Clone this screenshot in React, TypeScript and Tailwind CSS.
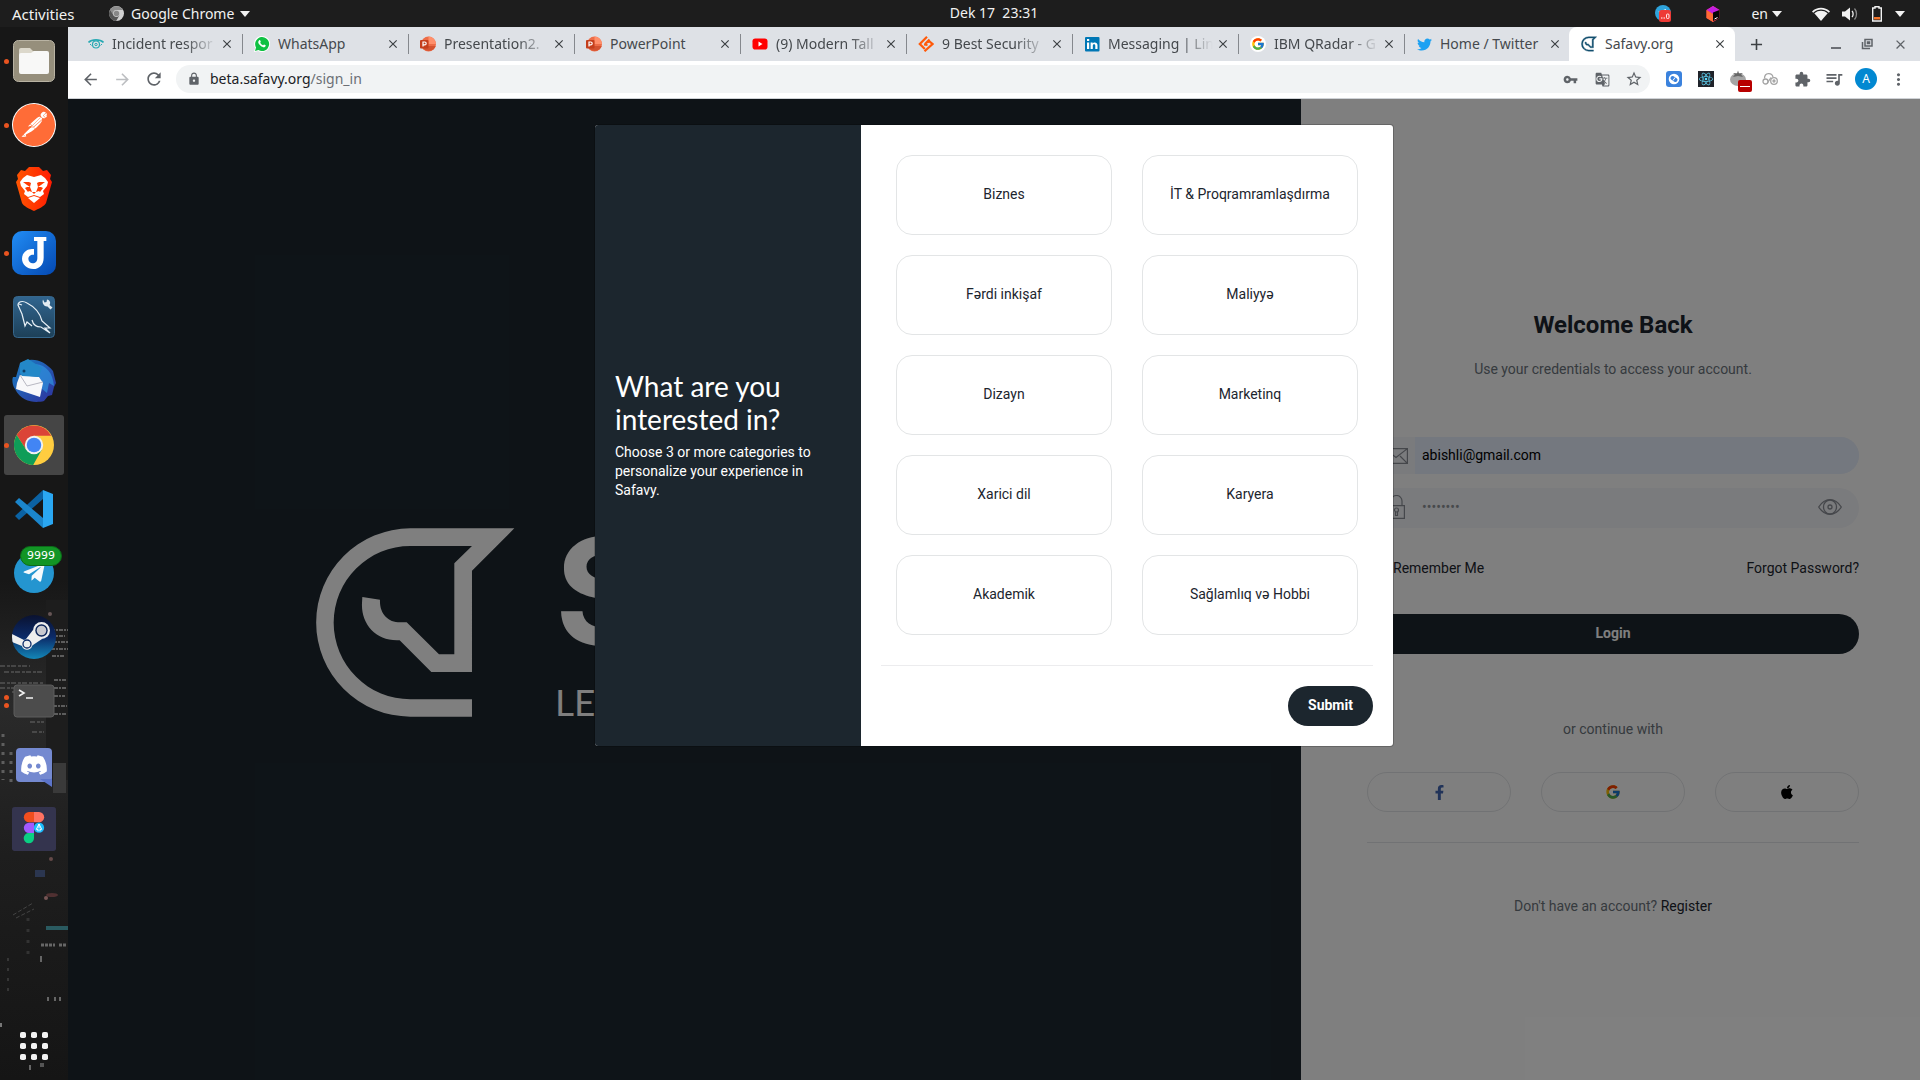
import React from "react";
import { FcGoogle } from "react-icons/fc";
import { FaFacebookF, FaApple, FaTwitter, FaDiscord, FaTelegramPlane } from "react-icons/fa";
import { SiPostman, SiReact } from "react-icons/si";
import { MdArrowBack, MdArrowForward, MdRefresh, MdLock, MdVpnKey, MdStarBorder, MdExtension, MdQueueMusic, MdMoreVert, MdClose, MdAdd, MdGTranslate } from "react-icons/md";

const MARK =
  "M513 650H328A282 282 0 0 1 328 85H640L513 212V516H391L296 421H288C222 421 180 370 183 310L184 291L237 299C235 340 260 368 300 367H317L414 463H460V190L513 138H328A230 230 0 0 0 328 598H513Z";

function PowerPointIcon() {
  return (
    <svg viewBox="0 0 16 16" className="size-4">
      <circle cx="8.500" cy="8" r="7.500" fill="#ed6c47" />
      <path d="M8.500.5a7.500 7.500 0 0 1 7.500 7.500H8.500Z" fill="#ff8f6b" />
      <path d="M1.500 10h14.200a7.500 7.500 0 0 1-14 0Z" fill="#d35230" />
      <rect x="0" y="4" width="8.500" height="8.500" rx="1" fill="#c43e1c" />
      <path d="M3 10.500v-4.500h1.700a1.400 1.400 0 0 1 0 2.900H3" fill="none" stroke="#fff" strokeWidth="1.200" />
    </svg>
  );
}

function WhatsAppIcon() {
  return (
    <svg viewBox="0 0 16 16" className="size-4">
      <path d="M0 16l1.100-4.100A8 8 0 1 1 4.200 15Z" fill="#fff" />
      <path d="M1 15l1-3.600A7 7 0 1 1 4.500 14Z" fill="#0fc143" />
      <path d="M5.200 4.200c.6-.4.900-.2 1.100.3l.5 1.200c0 .4-.6.800-.6 1.100.6 1.200 1.500 2 2.700 2.500.4 0 .8-.9 1.200-.8l1.500.8c.4.300-.2 1.700-1.200 2-2 .3-5.500-2.300-6.100-4.500-.1-1 .3-2.200.9-2.600Z" fill="#fff" />
    </svg>
  );
}

function EyeFavicon() {
  return (
    <svg viewBox="0 0 16 16" className="size-4" fill="none" stroke="#27a9b3">
      <path d="M.5 6.500C4 3 12 3 15.500 6.500" strokeWidth="1.600" />
      <circle cx="8" cy="8.500" r="3.500" strokeWidth="1.200" />
      <circle cx="8" cy="8.500" r="1.200" strokeWidth="1" />
      <path d="M2 8l1.500 1.500M14 8l-1.500 1.500" />
    </svg>
  );
}

function YouTubeIcon() {
  return (
    <svg viewBox="0 0 16 16" className="size-4">
      <rect x="0.500" y="2.500" width="15" height="11" rx="2.800" fill="#f00" />
      <path d="M6.500 5.500v5l4-2.500Z" fill="#fff" />
    </svg>
  );
}

function DiamondIcon() {
  return (
    <svg viewBox="0 0 16 16" className="size-4" fill="none" stroke="#ff5a0a" strokeWidth="2.200">
      <path d="M9 .8L1.800 8l5 5" />
      <path d="M11.500 3.500L7 8M8.500 6.500l3-1 3 2.500-8 7.200" />
      <path d="M6 8.500l3.500.5" />
    </svg>
  );
}

function LinkedInIcon() {
  return (
    <svg viewBox="0 0 16 16" className="size-4">
      <rect x="1" y="1" width="14.500" height="14.500" rx="1" fill="#0077b5" />
      <path d="M3 6.500h2.200V13H3ZM3 3h2.200v2H3ZM6.600 6.500h2v1c1-1.600 4.900-1.700 4.900 1.700V13h-2.200V9.700c0-2-2.500-1.800-2.500 0V13H6.600Z" fill="#fff" />
    </svg>
  );
}

function GoogleFavicon() {
  return (
    <span className="flex size-4 items-center justify-center rounded-full bg-white">
      <FcGoogle size={14} />
    </span>
  );
}

function SafavyIcon() {
  return (
    <svg viewBox="30 70 620 600" className="size-4" fill="#14506f">
      <path d={MARK} stroke="#14506f" strokeWidth="14" />
    </svg>
  );
}

type TabInfo = { title: string; icon: React.ReactNode; fade?: boolean; active?: boolean };

const tabs: TabInfo[] = [
  { title: "Incident respor", icon: <EyeFavicon />, fade: true },
  { title: "WhatsApp", icon: <WhatsAppIcon /> },
  { title: "Presentation2.", icon: <PowerPointIcon />, fade: true },
  { title: "PowerPoint", icon: <PowerPointIcon /> },
  { title: "(9) Modern Tall", icon: <YouTubeIcon />, fade: true },
  { title: "9 Best Security", icon: <DiamondIcon />, fade: true },
  { title: "Messaging | Lin", icon: <LinkedInIcon />, fade: true },
  { title: "IBM QRadar - G", icon: <GoogleFavicon />, fade: true },
  { title: "Home / Twitter", icon: <FaTwitter size={15} color="#1da1f2" /> },
  { title: "Safavy.org", icon: <SafavyIcon />, active: true },
];

function Tab({ tab }: { tab: TabInfo }) {
  const skin = tab.active ? "-ml-px rounded-t-lg bg-white" : "";
  const mask = tab.fade ? "[mask-image:linear-gradient(to_right,black_70%,transparent)]" : "";
  return (
    <div className={"flex h-[34px] w-[166px] min-w-0 items-center pr-[7px] pl-3 " + skin}>
      <span className="flex size-4 shrink-0 items-center justify-center">{tab.icon}</span>
      <span className={"ml-2 min-w-0 flex-1 overflow-hidden pb-px text-[14px] leading-5 whitespace-nowrap text-[#45494d] " + mask}>{tab.title}</span>
      <button type="button" aria-label={"Close " + tab.title} className="ml-[2px] flex size-4 shrink-0 items-center justify-center text-[#3c4043]">
        <MdClose size={14} />
      </button>
    </div>
  );
}

function Caret() {
  return (
    <svg viewBox="0 0 10 6" className="h-[6px] w-[10px]" fill="#f2f2f2">
      <path d="M0 0h10L5 6Z" />
    </svg>
  );
}

function ChromeLogo({ className, mono }: { className: string; mono?: boolean }) {
  const c = mono ? ["#8d8d8d", "#555", "#d0d0d0", "#888", "#ccc"] : ["#db4437", "#0f9d58", "#ffcd40", "#4285f4", "#f1f1f1"];
  return (
    <svg viewBox="0 0 48 48" className={className}>
      <circle cx="24" cy="24" r="24" fill={c[2]} />
      <path d="M24 13H44.800A24 24 0 0 0 3.200 12L14.500 29.500Z" fill={c[0]} />
      <path d="M3.200 12A24 24 0 0 0 23 48L33.500 29.500H14.500Z" fill={c[1]} />
      <circle cx="24" cy="24" r="11" fill={c[4]} />
      <circle cx="24" cy="24" r="8.700" fill={c[3]} />
    </svg>
  );
}

function TopBar() {
  return (
    <header className="grid h-[27px] grid-cols-[68px_1fr_auto_1fr] items-center bg-[#1d1d1d] text-[14px] leading-5 text-[#f2f2f2]">
      <button type="button" className="justify-self-start pl-3 text-[15px] whitespace-nowrap">Activities</button>
      <button type="button" className="ml-[41px] flex items-center justify-self-start whitespace-nowrap">
        <ChromeLogo className="mr-[7px] size-[15px]" mono />
        Google Chrome
        <span className="ml-[6px]"><Caret /></span>
      </button>
      <time className="pb-px whitespace-pre">Dek 17  23:31</time>
      <div className="flex items-center justify-self-end pr-[15px]">
        <svg viewBox="0 0 18 18" className="size-[18px]">
          <circle cx="8" cy="8" r="8" fill="#2ea3dc" />
          <path d="M3 7l8-3-1 4Z" fill="#fff" />
          <rect x="4" y="5" width="12" height="12" rx="2.500" fill="#ee3a36" />
          <path d="M6 13h1.500M8.500 13H10" stroke="#fff" />
          <rect x="11.500" y="9" width="2.500" height="4.500" rx="1" fill="none" stroke="#fff" strokeWidth="0.900" />
        </svg>
        <svg viewBox="0 0 16 18" className="ml-8 h-[18px] w-4">
          <path d="M8 1l6.500 4v8L8 17 1.500 13V5Z" fill="#fc3f4d" />
          <path d="M1.500 5L8 1l6.500 4L8 9Z" fill="#c51ee0" />
          <path d="M1.500 5L8 9v8l-6.500-4Z" fill="#ff6a35" />
          <path d="M8 7.500l6.500-2.500v8L8 16Z" fill="#060606" />
          <path d="M9.500 14l3-1.500" stroke="#fff" />
        </svg>
        <span className="ml-[30px]">en</span>
        <span className="ml-[4px]"><Caret /></span>
        <svg viewBox="0 0 18 14" className="ml-[30px] h-[14px] w-[18px]" fill="#f2f2f2">
          <path d="M0 4.500C5-.5 13-.5 18 4.500L16.800 5.800C12 1.500 6 1.500 1.200 5.800Z" />
          <path d="M2.300 6.300C6.500 3 11.500 3 15.700 6.300L9 14Z" />
        </svg>
        <svg viewBox="0 0 18 16" className="ml-[11px] h-4 w-[18px]" fill="none" stroke="#8b8b8b" strokeWidth="1.300">
          <path d="M1 5.500h3L9 1.500v13L4 10.500H1Z" fill="#f2f2f2" stroke="none" />
          <path d="M11 5c1.500 1.500 1.500 4.500 0 6" stroke="#f2f2f2" />
          <path d="M13.500 2.500c2.700 3 2.700 8 0 11" />
        </svg>
        <svg viewBox="0 0 12 16" className="ml-[12px] h-4 w-3">
          <path d="M4 2V.8h4V2h2.300v13H1.700V2Z" fill="none" stroke="#f2f2f2" strokeWidth="1.400" />
          <path d="M3 11h6v2.500H3Z" fill="#f37329" />
        </svg>
        <span className="ml-[12px]"><Caret /></span>
      </div>
    </header>
  );
}

function FilesIcon() {
  return (
    <svg viewBox="0 0 42 42" className="size-[42px]">
      <rect x="0.500" y="0.500" width="41" height="41" rx="5" fill="#968f7c" stroke="#b9b3a3" />
      <path d="M6 10a2 2 0 0 1 2-2h9l3 3h6v6H6Z" fill="#dcd8cb" />
      <path d="M6 15a2 2 0 0 1 2-2h10l3-2h13a2 2 0 0 1 2 2v19a2 2 0 0 1-2 2H8a2 2 0 0 1-2-2Z" fill="#f8f8f7" />
    </svg>
  );
}

function PostmanIcon() {
  return (
    <span className="flex size-11 items-center justify-center rounded-full bg-white text-[#ff6c37]">
      <SiPostman size={42} />
    </span>
  );
}

function BraveIcon() {
  return (
    <svg viewBox="0 0 38 44" className="h-11 w-[38px]">
      <defs>
        <linearGradient id="brave">
          <stop offset="0" stopColor="#ff5601" />
          <stop offset="1" stopColor="#ff1b02" />
        </linearGradient>
      </defs>
      <path d="M10 4l4-4h10l4 4 4-1 4 5-1 4 2 3-6 21c-1 3-8 6-12 8-4-2-11-5-12-8L1 15l2-3-1-4 4-5Z" fill="url(#brave)" />
      <path d="M19 10l7-2 4 3 3 4-1 4-4 5 1 3-4 3-3-1-3-1-3 1-3 1-4-3 1-3-4-5-1-4 3-4 4-3Z" fill="#fff" />
      <path d="M8 15l6 0 2 1-1 4 2 5-3-1-1 1-3-4 2-1 3 0-3-2ZM30 15l-6 0-2 1 1 4-2 5 3-1 1 1 3-4-2-1-3 0 3-2ZM17 25h4l-2 2Z" fill="#ff3b02" />
      <path d="M13 31l6-2 6 2-6 5Z" fill="#fff" />
    </svg>
  );
}

function JoplinIcon() {
  return (
    <svg viewBox="0 0 132 132" className="size-11">
      <defs>
        <linearGradient id="joplin" x2="1" y2="1">
          <stop offset="0" stopColor="#218df5" />
          <stop offset="1" stopColor="#0448b2" />
        </linearGradient>
      </defs>
      <rect width="132" height="132" rx="30" fill="url(#joplin)" />
      <path d="M66 18H103V30H95V80C95 101 82 114 64 114C45 114 30 100 30 83C30 66 44 54 60 54H66V71C55 70 49 76 49 83C49 91 55 97 62 97C70 97 76 91 76 82V30H66Z" fill="#fff" />
    </svg>
  );
}

function WorkbenchIcon() {
  return (
    <svg viewBox="0 0 42 42" className="size-[42px]">
      <defs>
        <linearGradient id="bench" x2="0" y2="1">
          <stop offset="0" stopColor="#31658f" />
          <stop offset="1" stopColor="#1d4058" />
        </linearGradient>
      </defs>
      <rect x="0.500" y="0.500" width="41" height="41" rx="4" fill="url(#bench)" stroke="#36678c" />
      <path d="M9 18L5 9C5 6 9 4 14 7C22 11 27 17 29 25L37 32L32 32L37 37L28 31C23 31 20 28 19 24M9 18L12 30L14 26L19 30M6 8L9 9" fill="none" stroke="#e8f0f6" strokeWidth="1.200" />
      <path d="M30 3.500l1.500 3 2-.5.500-2.500c3 .5 4 3.500 2.500 5.500l3 2.500-2 2-3-3c-3 .5-6-3.500-4.500-7Z" fill="#e3ebf1" />
    </svg>
  );
}

function ThunderbirdIcon() {
  return (
    <svg viewBox="0 0 44 44" className="size-11">
      <defs>
        <linearGradient id="bird" x2="1" y2="1">
          <stop offset="0" stopColor="#1a80c4" />
          <stop offset="1" stopColor="#2f2f9c" />
        </linearGradient>
      </defs>
      <path d="M8 4C20-3 33 2 41 12L44 24 42 28 40 36 36 37 32 42C24 44 10 44 3 30C0 26 0 20 1 18L4 18Z" fill="url(#bird)" />
      <path d="M24 5C34 6 41 14 42 27L37 24 35 34 30 30Z" fill="#2f93e0" opacity="0.700" />
      <path d="M8 16l19 2 4 6-3 14L4 30 5 24Z" fill="#f8f8fa" />
      <path d="M8 16l7 11 16-4" fill="none" stroke="#b8b8c2" />
      <path d="M8 4l8-4 14 9-3 9-17-1-2-3Z" fill="#2388c8" />
      <circle cx="12" cy="12" r="1.500" fill="#0e3e68" />
    </svg>
  );
}

function CodeIcon() {
  return (
    <svg viewBox="0 0 40 40" className="size-10">
      <path d="M1 27l4 4L29 10V1Z" fill="#0b62a3" />
      <path d="M1 13l4-4 24 20v10Z" fill="#1b86cc" />
      <path d="M29 1l10 4v30l-10 4Z" fill="#2aa7f2" />
    </svg>
  );
}

function TelegramIcon() {
  return (
    <span className="relative flex size-10 items-center justify-center rounded-full bg-[#2495d0]">
      <FaTelegramPlane size={24} color="#f5f9fc" />
      <span className="absolute -top-[7px] left-[6px] rounded-full border border-[#0c6b1a] bg-[#129525] px-[6px] font-['DejaVu_Sans',sans-serif] text-[11px] leading-[18px] text-white">9999</span>
    </span>
  );
}

function SteamIcon() {
  return (
    <svg viewBox="0 0 44 44" className="size-11">
      <defs>
        <linearGradient id="steam" x2="0" y2="1">
          <stop offset="0" stopColor="#0a1230" />
          <stop offset="0.500" stopColor="#0b2a68" />
          <stop offset="1" stopColor="#1387b8" />
        </linearGradient>
        <clipPath id="disc"><circle cx="22" cy="22" r="22" /></clipPath>
      </defs>
      <circle cx="22" cy="22" r="22" fill="url(#steam)" />
      <g clipPath="url(#disc)">
        <path d="M0 19l12 6 2-1 7-9 9 9-9 6-1 1c-1 5-9 5-10 0L0 27Z" fill="#eee" />
      </g>
      <circle cx="29.500" cy="15.500" r="8.500" fill="#eee" />
      <circle cx="29.500" cy="15.500" r="6.200" fill="#0b2458" />
      <circle cx="29.500" cy="15.500" r="4.800" fill="#c9c9cf" />
      <circle cx="15" cy="29" r="4" fill="none" stroke="#0b2a68" strokeWidth="1.300" />
    </svg>
  );
}

function TerminalIcon() {
  return (
    <svg viewBox="0 0 42 34" className="h-[34px] w-[42px]">
      <rect x="1" y="1" width="40" height="32" rx="3" fill="#4c4c4c" stroke="#5d5d5d" />
      <path d="M6 6l5 3-5 3M13 14h7" fill="none" stroke="#f2f2f2" strokeWidth="1.600" />
    </svg>
  );
}

function DiscordIcon() {
  return (
    <span className="relative flex h-[34px] w-9 items-center justify-center rounded-[4px] bg-[#7489d0]">
      <svg viewBox="0 0 12 8" className="absolute right-0 -bottom-[5px] h-2 w-3" fill="#5c74c9"><path d="M0 0h12v8Z" /></svg>
      <FaDiscord size={28} color="#fff" />
    </span>
  );
}

function FigmaIcon() {
  return (
    <svg viewBox="0 0 132 132" className="size-11">
      <rect width="132" height="132" rx="8" fill="#34344e" />
      <path d="M66 15H51a15.500 15.500 0 0 0 0 31H66Z" fill="#f24e1e" />
      <path d="M66 15H81a15.500 15.500 0 0 1 0 31H66Z" fill="#ff7262" />
      <path d="M66 47H51a15.500 15.500 0 0 0 0 31H66Z" fill="#a259ff" />
      <path d="M66 78H51a15.500 15.500 0 1 0 15 15Z" fill="#0acf83" />
      <circle cx="81" cy="62" r="15.500" fill="#1abcfe" />
      <path d="M81 51l-8 16h5v6M81 51l8 16h-5v6M81 51v13" fill="none" stroke="#fff" strokeWidth="3" />
    </svg>
  );
}

const apps: { name: string; icon: React.ReactNode; dots: number; active?: boolean }[] = [
  { name: "Files", icon: <FilesIcon />, dots: 1 },
  { name: "Postman", icon: <PostmanIcon />, dots: 1 },
  { name: "Brave", icon: <BraveIcon />, dots: 0 },
  { name: "Joplin", icon: <JoplinIcon />, dots: 1 },
  { name: "MySQL Workbench", icon: <WorkbenchIcon />, dots: 0 },
  { name: "Thunderbird", icon: <ThunderbirdIcon />, dots: 0 },
  { name: "Google Chrome", icon: <ChromeLogo className="size-10" />, dots: 1, active: true },
  { name: "Visual Studio Code", icon: <CodeIcon />, dots: 0 },
  { name: "Telegram", icon: <TelegramIcon />, dots: 0 },
  { name: "Steam", icon: <SteamIcon />, dots: 0 },
  { name: "Terminal", icon: <TerminalIcon />, dots: 2 },
  { name: "Discord", icon: <DiscordIcon />, dots: 0 },
  { name: "Figma", icon: <FigmaIcon />, dots: 0 },
];

function CityBackdrop() {
  return (
    <svg viewBox="0 0 68 500" className="pointer-events-none absolute bottom-0 left-0 h-[500px] w-[68px]" aria-hidden="true">
      <defs>
        <linearGradient id="city" x2="0" y2="1">
          <stop offset="0" stopColor="#171717" />
          <stop offset="0.250" stopColor="#2a2a2a" />
          <stop offset="0.550" stopColor="#1e1e1e" />
          <stop offset="1" stopColor="#151515" />
        </linearGradient>
      </defs>
      <rect width="68" height="500" fill="url(#city)" />
      <path d="M46 20h22v180H46Z" fill="#1d1d1d" />
      <g fill="none" stroke="#777" opacity="0.700">
        <path d="M51 50h17M51 56h14M53 62h15M51 69h17M52 76h12M54 100h13M54 108h13M54 116h11M53 126h14M54 134h12" strokeWidth="2" strokeDasharray="4 1 2 1" />
        <path d="M0 86h30M4 92h40M0 103h44M0 108h50M12 112h32M30 133h16M30 142h14M32 152h12" strokeWidth="2" strokeDasharray="5 2 3 1" opacity="0.600" />
        <path d="M3 154v46M11 172v30" strokeWidth="3" strokeDasharray="3 6" />
      </g>
      <path d="M53 183h13v30H53Z" fill="#3a3a3a" />
      <circle cx="50" cy="34" r="2" fill="#655" />
      <circle cx="51" cy="279" r="2" fill="#654a48" />
      <rect x="35" y="290" width="10" height="7" fill="#2b3650" />
      <ellipse cx="52" cy="315" rx="6" ry="2" fill="#4f3031" />
      <circle cx="46" cy="318" r="2" fill="#755" />
      <path d="M46 348h22" stroke="#2a5a60" strokeWidth="4" />
      <path d="M41 365h14M59 365h8" stroke="#666" strokeWidth="3" strokeDasharray="3 1" />
      <path d="M13 335l20-12M16 338l18-9" stroke="#444" strokeDasharray="4 2" />
      <path d="M28 338v40" stroke="#333" strokeWidth="3" strokeDasharray="3 8" />
      <path d="M8 378v36" stroke="#555" strokeDasharray="3 7" />
      <path d="M41 376v6M48 417v4M55 417v4M60 417v4M30 485v5" stroke="#666" strokeWidth="2" />
      <rect x="40" y="483" width="4" height="4" fill="#555" />
      <rect x="0" y="443" width="2" height="4" fill="#777" />
    </svg>
  );
}

function Dock() {
  return (
    <nav aria-label="Dock" className="relative flex w-[68px] shrink-0 flex-col bg-[#171717] pt-1">
      <CityBackdrop />
      <ul className="relative flex flex-col gap-1">
        {apps.map((app) => (
          <li key={app.name} className="relative flex justify-center px-1">
            <span className="absolute top-0 left-1 flex h-[60px] flex-col justify-center gap-[3px]">
              {Array.from({ length: app.dots }, (_, i) => (
                <i key={i} className="block size-[5px] rounded-full bg-[#e95420]" />
              ))}
            </span>
            <button type="button" aria-label={app.name} className={"flex size-[60px] items-center justify-center rounded-[3px] " + (app.active ? "bg-white/20" : "")}>
              {app.icon}
            </button>
          </li>
        ))}
      </ul>
      <button type="button" aria-label="Show applications" className="relative mt-auto mb-4 self-center">
        <svg viewBox="0 0 36 36" className="size-9" fill="#f2f2f2">
          {[4, 15, 26].map((y) => [4, 15, 26].map((x) => <rect key={x + "-" + y} x={x} y={y} width="6" height="6" rx="1.800" />))}
        </svg>
      </button>
    </nav>
  );
}

function TabStrip() {
  return (
    <div className="flex h-[34px] items-center bg-[#dee1e6] pl-2">
      {tabs.map((t, i) => (
        <React.Fragment key={t.title}>
          <Tab tab={t} />
          {i < 8 && <i className="-mr-px h-5 w-px shrink-0 bg-[#85888d]" />}
        </React.Fragment>
      ))}
      <button type="button" aria-label="New tab" className="ml-3 text-[#3c4043]"><MdAdd size={19} /></button>
      <div className="ml-auto flex w-[100px] shrink-0 items-center justify-around pr-[2px] text-[#5f6368]">
        <button type="button" aria-label="Minimize"><svg viewBox="0 0 12 12" className="size-3"><path d="M1 10h10" stroke="currentColor" strokeWidth="1.800" /></svg></button>
        <button type="button" aria-label="Restore"><svg viewBox="0 0 12 12" className="size-3" fill="none" stroke="currentColor" strokeWidth="1.500"><path d="M4 1.500h7v6.500H4ZM1.500 4v6.500H9M6.500 4h2v1.500h-2Z" /></svg></button>
        <button type="button" aria-label="Close window"><MdClose size={15} /></button>
      </div>
    </div>
  );
}

function Toolbar() {
  return (
    <div className="flex h-[38px] items-center border-b border-[#cfd2d6] bg-white px-[6px] pb-px text-[#5f6368]">
      <button type="button" aria-label="Back" className="flex w-8 justify-center"><MdArrowBack size={19} /></button>
      <button type="button" aria-label="Forward" className="flex w-8 justify-center text-[#bcbec1]"><MdArrowForward size={19} /></button>
      <button type="button" aria-label="Reload" className="flex w-8 justify-center"><MdRefresh size={20} /></button>
      <div className="ml-[6px] flex h-7 min-w-0 flex-1 items-center rounded-full bg-[#f1f3f4] pl-[11px]">
        <MdLock size={14} />
        <a href="#sign_in" className="ml-[9px] flex-1 text-[14px] leading-5 text-[#202124]">
          beta.safavy.org<span className="text-[#6b6f74]">/sign_in</span>
        </a>
        <button type="button" aria-label="Saved passwords" className="flex w-8 justify-center"><MdVpnKey size={15} /></button>
        <button type="button" aria-label="Translate" className="flex w-8 justify-center"><MdGTranslate size={15} /></button>
        <button type="button" aria-label="Bookmark" className="flex w-8 justify-center"><MdStarBorder size={18} /></button>
      </div>
      <div className="ml-2 flex items-center">
        <button type="button" aria-label="Page sync" className="flex w-8 justify-center">
          <svg viewBox="0 0 16 16" className="size-4"><rect width="16" height="16" rx="3" fill="#3b82dd" /><circle cx="8" cy="8" r="5.300" fill="#fff" /><path d="M6.500 7l3 2" stroke="#3b82dd" strokeWidth="4" strokeLinecap="round" /><path d="M9 6.500l-2 3" stroke="#fff" strokeWidth="1" /></svg>
        </button>
        <button type="button" aria-label="React tools" className="flex w-8 justify-center">
          <span className="flex size-4 items-center justify-center bg-[#20232a]"><SiReact size={14} color="#61dafb" /></span>
        </button>
        <button type="button" aria-label="Tomato timer" className="relative flex w-8 justify-center">
          <svg viewBox="0 0 18 18" className="size-[18px]"><ellipse cx="9" cy="9.500" rx="8" ry="6.500" fill="#a5a5a5" /><path d="M9 6L4 7l2-2.500-2-1.500 4 .5 1-3 1 3 4-.5-2 1.500 2 2.500Z" fill="#666" /></svg>
          <span className="absolute top-[10px] left-4 flex h-3 w-[14px] items-center justify-center rounded-[2px] bg-[#b80000]"><i className="h-px w-[10px] bg-white" /></span>
        </button>
        <button type="button" aria-label="Cloud rings" className="flex w-8 justify-center">
          <svg viewBox="0 0 16 16" className="size-4" fill="none" stroke="#a4a4a4" strokeWidth="1.300"><circle cx="3.500" cy="10.500" r="2.500" /><circle cx="12" cy="10" r="3.300" /><circle cx="12" cy="10" r="1" /><path d="M2.500 7.500C2.500 1 10 1.500 11 6M5 12.500l4-6" /></svg>
        </button>
        <button type="button" aria-label="Extensions" className="flex w-8 justify-center"><MdExtension size={17} /></button>
        <button type="button" aria-label="Media" className="flex w-8 justify-center"><MdQueueMusic size={20} /></button>
        <button type="button" aria-label="Profile" className="flex w-8 justify-center">
          <span className="flex size-[22px] items-center justify-center rounded-full bg-[#0288d1] text-[12px] text-white">A</span>
        </button>
        <button type="button" aria-label="Menu" className="flex w-8 justify-center"><MdMoreVert size={19} /></button>
      </div>
    </div>
  );
}

function BrandPanel() {
  return (
    <section className="bg-[#1c272f] pt-[429px]">
      <svg viewBox="315 528 738 190" className="mx-auto w-[738px] max-w-full" role="img" aria-label="Safavy" fill="#fff">
        <g transform="translate(300 500) scale(0.3333)"><path d={MARK} /></g>
        <text x="554" y="644" fontFamily="Inter" fontWeight="700" fontSize="147">SA</text>
        <text x="554" y="716" fontFamily="Lato" fontSize="37">LEA</text>
      </svg>
    </section>
  );
}

const socialButton = "flex h-10 items-center justify-center rounded-full border border-[#e3e5e8]";

function SignInPanel() {
  return (
    <section className="bg-white pt-[210px] pr-[61px] pl-[66px] text-center text-[14px] leading-5 text-[#6c757d]">
      <h1 className="text-[24px] leading-8 font-bold text-[#1c252e]">Welcome Back</h1>
      <p className="mt-[18px]">Use your credentials to access your account.</p>
      <form className="mt-[58px]" onSubmit={(e) => e.preventDefault()}>
        <label className="flex h-[37px] items-center overflow-hidden rounded-full bg-[#f5f6fa]">
          <span className="flex w-12 shrink-0 items-center pl-[17px]">
            <svg viewBox="0 0 24 16" className="h-4 w-6" fill="none" stroke="#8b8f97" strokeWidth="1.200"><path d="M.6.6h22.800v14.800H.6ZM.6.6L12 9.500 23.400.6M.6 15.400L8 8M23.400 15.400L16 8" /></svg>
          </span>
          <input type="email" aria-label="Email" defaultValue="abishli@gmail.com" className="h-full min-w-0 flex-1 bg-[#e8f0fe] px-[7px] pb-[2px] text-black outline-none" />
        </label>
        <div className="mt-[14px] flex h-10 items-center rounded-full bg-[#f5f6fa] pr-[17px] pb-[2px]">
          <span className="flex w-12 shrink-0 pl-[21px]">
            <svg viewBox="0 0 17 24" className="h-6 w-[17px]" fill="none" stroke="#8b8f97" strokeWidth="1.200"><path d="M.6 10.600h15.800v12.800H.6ZM3 10.500V6a5.500 5.500 0 0 1 11 0v4.500" /><circle cx="8.500" cy="15" r="2" /><path d="M7.500 17v3.500h2V17" /></svg>
          </span>
          <input type="password" aria-label="Password" placeholder="••••••••" className="min-w-0 flex-1 px-[7px] placeholder-[#8f9499] outline-none" />
          <button type="button" aria-label="Show password">
            <svg viewBox="0 0 24 16" className="h-4 w-6" fill="none" stroke="#8b8f97" strokeWidth="1.300"><path d="M.7 8C7-1.800 17-1.800 23.300 8 17 17.800 7 17.800.7 8Z" /><ellipse cx="12" cy="8" rx="6.500" ry="7" /><circle cx="12" cy="8" r="2" /></svg>
          </button>
        </div>
        <div className="mt-[30px] flex items-center justify-between text-[#1c252e]">
          <label className="flex items-center gap-[10px]"><input type="checkbox" className="size-4" />Remember Me</label>
          <a href="#forgot">Forgot Password?</a>
        </div>
        <button type="submit" className="mt-9 h-10 w-full rounded-full bg-[#1c262e] pb-[2px] font-bold text-white">Login</button>
      </form>
      <p className="mt-[65px]">or continue with</p>
      <div className="mt-[33px] grid grid-cols-3 gap-[30px]">
        <button type="button" aria-label="Facebook" className={socialButton}><FaFacebookF size={15} color="#4267b2" /></button>
        <button type="button" aria-label="Google" className={socialButton}><FcGoogle size={16} /></button>
        <button type="button" aria-label="Apple" className={socialButton}><FaApple size={16} color="#000" /></button>
      </div>
      <hr className="mt-[30px] border-[#e3e5e8]" />
      <p className="mt-[53px]">Don't have an account? <a href="#register" className="text-[#1c252e]">Register</a></p>
    </section>
  );
}

const categories = ["Biznes", "İT & Proqramramlaşdırma", "Fərdi inkişaf", "Maliyyə", "Dizayn", "Marketinq", "Xarici dil", "Karyera", "Akademik", "Sağlamlıq və Hobbi"];

function InterestsDialog() {
  return (
    <div className="absolute inset-0 flex items-start justify-center bg-black/50 pt-[25px]">
      <div role="dialog" aria-labelledby="interests-title" className="flex w-full max-w-[800px] overflow-hidden rounded-[4px] border border-black/20 bg-white bg-clip-padding">
        <div className="flex w-1/3 flex-col justify-center bg-[#1c262e] px-5 pb-[2px] text-white">
          <h2 id="interests-title" className="font-[Lato,sans-serif] text-[28px] leading-[33px]">What are you interested in?</h2>
          <p className="mt-[7px] text-[14px] leading-[19px]">Choose 3 or more categories to personalize your experience in Safavy.</p>
        </div>
        <div className="w-2/3 px-5 pb-5">
          <div className="grid grid-cols-2 gap-x-[30px] gap-y-5 px-[15px] py-[30px]">
            {categories.map((c) => (
              <button key={c} type="button" className="h-20 rounded-2xl border border-[#e3e5e6] pb-[2px] text-[14px] leading-5 text-[#1c252e]">{c}</button>
            ))}
          </div>
          <div className="flex justify-end border-t border-[#ececee] pt-5">
            <button type="button" className="h-10 w-[85px] rounded-full bg-[#1c262e] pb-[2px] text-[14px] font-bold text-white">Submit</button>
          </div>
        </div>
      </div>
    </div>
  );
}

export default function App() {
  return (
    <div className="flex min-h-screen flex-col bg-[#171717] font-['Noto_Sans',sans-serif]">
      <TopBar />
      <div className="flex flex-1">
        <Dock />
        <div className="flex min-w-0 flex-1 flex-col">
          <TabStrip />
          <Toolbar />
          <main className="relative grid flex-1 grid-cols-[1233fr_619fr] font-[Roboto,sans-serif]">
            <BrandPanel />
            <SignInPanel />
            <InterestsDialog />
          </main>
        </div>
      </div>
    </div>
  );
}
